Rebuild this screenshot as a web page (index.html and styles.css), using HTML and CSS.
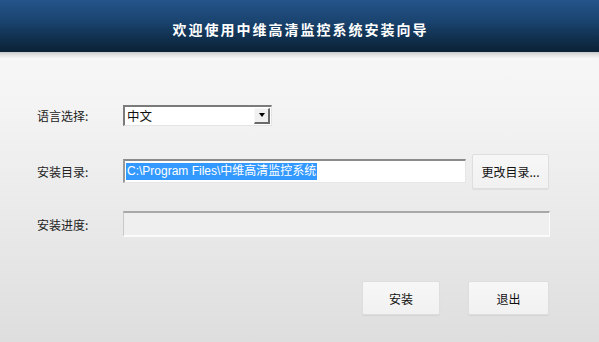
FILE: index.html
```html
<!DOCTYPE html>
<html lang="zh">
<head>
<meta charset="utf-8">
<title>安装向导</title>
<link rel="stylesheet" href="styles.css">
</head>
<body>
<div class="window">
  <header class="titlebar">
    <h1 class="title">欢迎使用中维高清监控系统安装向导</h1>
  </header>
  <div class="band"></div>
  <main class="content">
    <div class="row row-lang">
      <span class="label">语言选择:</span>
      <div class="select">
        <span class="select-value">中文</span>
        <span class="select-btn"><span class="arrow"></span></span>
      </div>
    </div>
    <div class="row row-dir">
      <span class="label">安装目录:</span>
      <div class="input"><span class="selected">C:\Program Files\中维高清监控系统</span></div>
      <button class="btn btn-browse">更改目录...</button>
    </div>
    <div class="row row-progress">
      <span class="label">安装进度:</span>
      <div class="progress"></div>
    </div>
    <div class="actions">
      <button class="btn btn-action btn-install">安装</button>
      <button class="btn btn-action btn-exit">退出</button>
    </div>
  </main>
</div>
</body>
</html>
```

FILE: styles.css
```css
* { box-sizing: border-box; }
html, body {
  margin: 0;
  padding: 0;
  width: 599px;
  height: 342px;
  overflow: hidden;
}
body {
  font-family: "Noto Sans CJK SC", "Liberation Sans", sans-serif;
  font-size: 12px;
  color: #1a1a1a;
}
.window {
  width: 599px;
  height: 342px;
  display: flex;
  flex-direction: column;
  background: linear-gradient(to bottom, #fafafa 0%, #f4f4f4 30%, #e6e6e6 75%, #dedede 100%);
}
.titlebar {
  height: 52px;
  background: linear-gradient(to bottom, #24548a 0%, #1a4470 40%, #0f2c48 80%, #0b2236 100%);
  display: flex;
  align-items: center;
  justify-content: center;
  flex-shrink: 0;
}
.title {
  margin: 0 0 0 2px;
  padding-top: 5px;
  color: #ffffff;
  font-size: 14px;
  font-weight: bold;
  letter-spacing: 2px;
  font-family: "Noto Sans CJK SC", sans-serif;
}
.band {
  height: 6px;
  flex-shrink: 0;
  background: linear-gradient(to bottom, #c8c8c8 0%, #dedede 40%, #f4f4f4 100%);
}
.content {
  flex: 1;
  padding: 39px 0 0 37px;
  display: flex;
  flex-direction: column;
}
.row {
  display: flex;
  align-items: center;
  height: 36px;
}
.row-dir { margin-top: 20px; }
.row-progress { margin-top: 17px; }
.label {
  width: 86px;
  flex-shrink: 0;
  font-size: 12px;
  color: #222;
}
.select {
  width: 149px;
  height: 21px;
  background: #fff;
  border-style: solid;
  border-width: 2px 1px 1px 2px;
  border-color: #7b7b7b #e4e4e4 #e4e4e4 #7b7b7b;
  display: flex;
  align-items: center;
  padding: 0 1px 0 2px;
}
.select-value {
  flex: 1;
  font-size: 12.5px;
  color: #111;
}
.select-btn {
  width: 16px;
  height: 16px;
  background: #f0f0f0;
  border-style: solid;
  border-width: 1px 2px 2px 1px;
  border-color: #f8f8f8 #6a6a6a #6a6a6a #f8f8f8;
  display: flex;
  align-items: center;
  justify-content: center;
}
.arrow {
  width: 0;
  height: 0;
  border-left: 3.5px solid transparent;
  border-right: 3.5px solid transparent;
  border-top: 4px solid #000;
}
.input {
  width: 343px;
  height: 24px;
  background: #fff;
  border-style: solid;
  border-width: 2px 1px 1px 2px;
  border-color: #8a8a8a #e6e6e6 #e6e6e6 #9a9a9a;
  display: flex;
  align-items: center;
  padding-left: 1px;
}
.selected {
  background: #3399ff;
  color: #fff;
  font-size: 12px;
  font-family: "Liberation Sans", "Noto Sans CJK SC", sans-serif;
  line-height: 17px;
  padding: 0 1px;
}
.btn {
  font-family: "Noto Sans CJK SC", sans-serif;
  font-size: 12px;
  color: #111;
  background: linear-gradient(to bottom, #f7f7f7 0%, #f1f1f1 100%);
  border: 1px solid #dedede;
  border-radius: 2px;
  box-shadow: 0 1px 1px rgba(0, 0, 0, 0.06);
  padding: 0;
  cursor: default;
}
.btn-browse {
  width: 77px;
  height: 35px;
  margin-left: 6px;
}
.progress {
  width: 427px;
  height: 26px;
  background: #efefef;
  border-style: solid;
  border-width: 2px 1px 2px 1px;
  border-color: #a8a8a8 #fbfbfb #fbfbfb #c8c8c8;
}
.actions {
  display: flex;
  justify-content: flex-end;
  gap: 28px;
  padding-right: 50px;
  margin-top: 39px;
}
.btn-action {
  height: 34px;
}
.btn-install { width: 78px; }
.btn-exit { width: 81px; }
```
